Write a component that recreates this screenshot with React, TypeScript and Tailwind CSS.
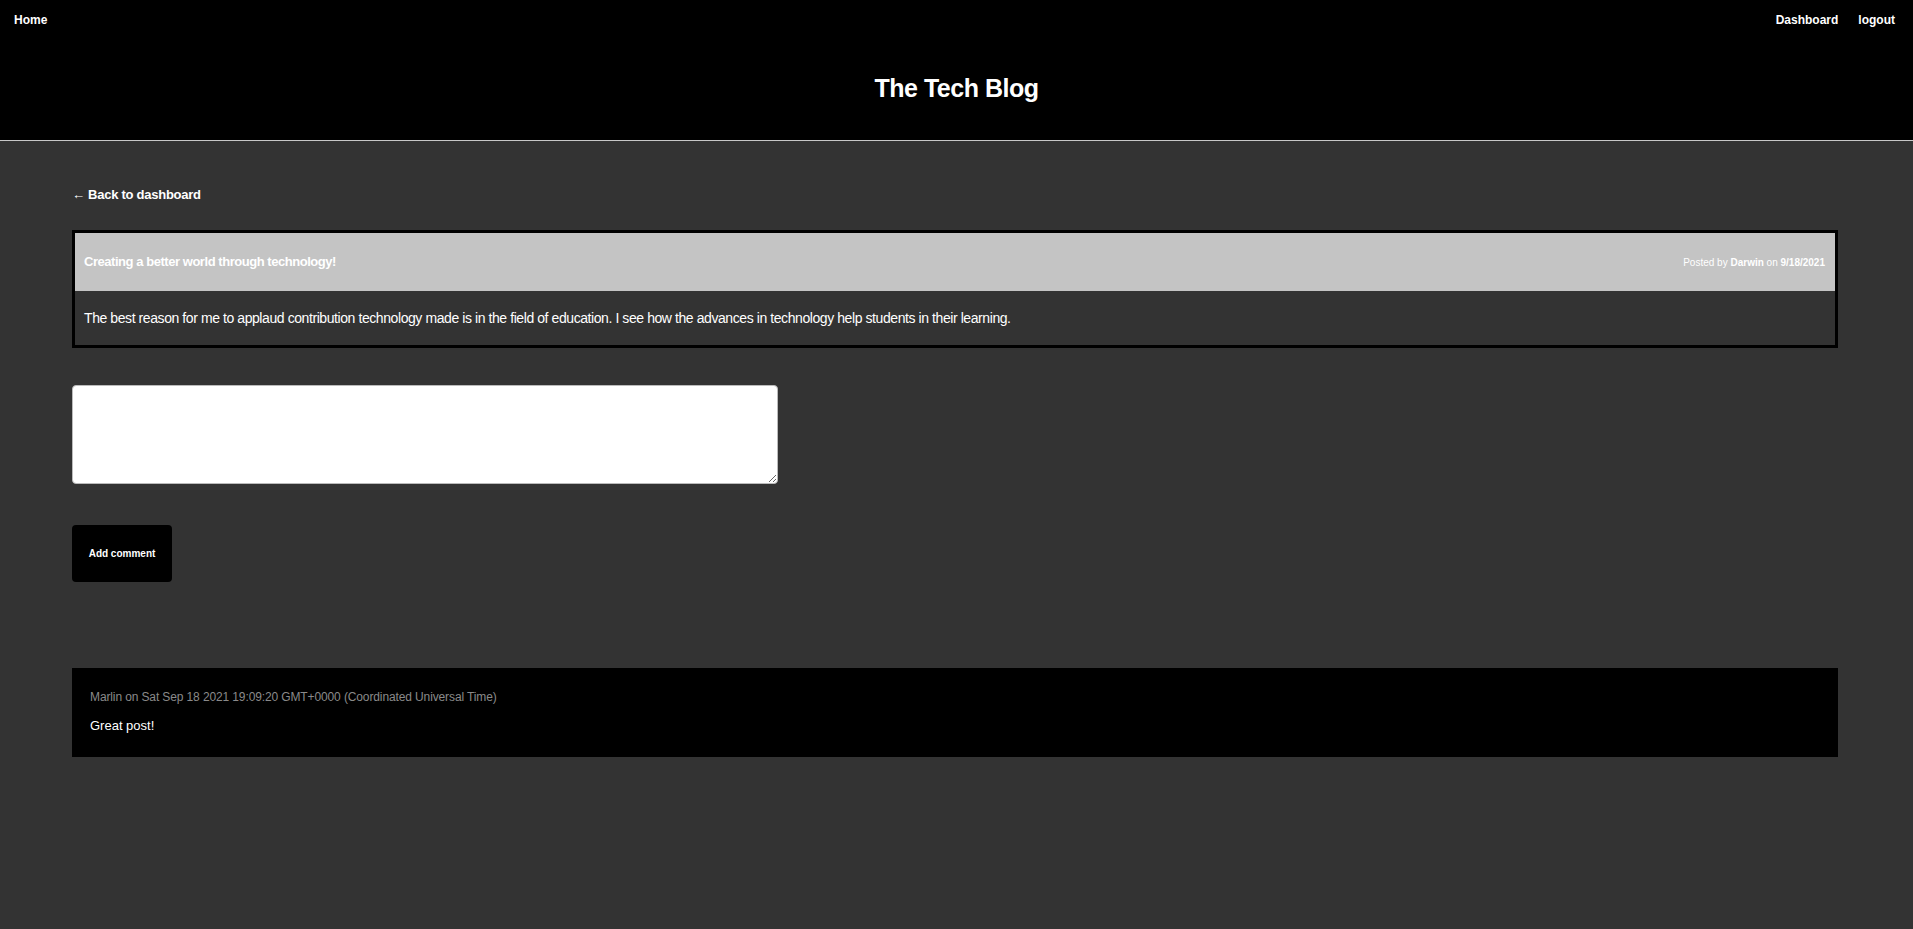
import React from 'react';

const font = { fontFamily: '"Liberation Sans", Arial, sans-serif' };

const Header = () => (
  <header className="h-[141px] border-b border-[#c8c8c8] bg-black text-white">
    <nav className="flex items-center justify-between px-[14px] pt-[10px] text-[12px] font-bold leading-[20px]">
      <a href="#">Home</a>
      <div className="flex gap-[20px] pr-[4px]">
        <a href="#">Dashboard</a>
        <a href="#">logout</a>
      </div>
    </nav>
    <h1 className="mt-[46px] text-center text-[25px] font-bold leading-none tracking-[-0.02em]">The Tech Blog</h1>
  </header>
);

export default function App() {
  return (
    <div className="min-h-[929px] bg-[#333333] text-white" style={font}>
      <Header />
      <main className="pl-[72px] pr-[75px] pt-[43px]">
        <div className="leading-[20px]">
          <a href="#" className="text-[13px] font-bold tracking-[-0.02em]">← Back to dashboard</a>
        </div>

        <div className="mt-[25px] border-[3px] border-black">
          <div className="flex h-[58px] items-center justify-between bg-[#c4c4c4] pl-[9px] pr-[10px]">
            <span className="text-[13px] font-bold tracking-[-0.035em]">Creating a better world through technology!</span>
            <span className="text-[10px]">
              Posted by <b>Darwin</b> on <b>9/18/2021</b>
            </span>
          </div>
          <p className="flex h-[54px] items-center px-[9px] text-[14px] tracking-[-0.03em]">
            The best reason for me to applaud contribution technology made is in the field of education. I see how the advances in technology help students in their learning.
          </p>
        </div>

        <form className="mt-[37px] flex flex-col items-start" onSubmit={(e) => e.preventDefault()}>
          <textarea className="h-[99px] w-[706px] rounded-[4px] border border-[#bbb] bg-white" />
          <button className="mt-[41px] h-[57px] w-[100px] rounded-[4px] bg-black text-[10px] font-bold text-white">
            Add comment
          </button>
        </form>

        <div className="mt-[86px] h-[89px] bg-black px-[18px] pt-[20px]">
          <p className="text-[12px] leading-[18px] tracking-[-0.01em] text-[#8a8a8a]">
            Marlin on Sat Sep 18 2021 19:09:20 GMT+0000 (Coordinated Universal Time)
          </p>
          <p className="mt-[10px] text-[13px] leading-[20px]">Great post!</p>
        </div>
      </main>
    </div>
  );
}
